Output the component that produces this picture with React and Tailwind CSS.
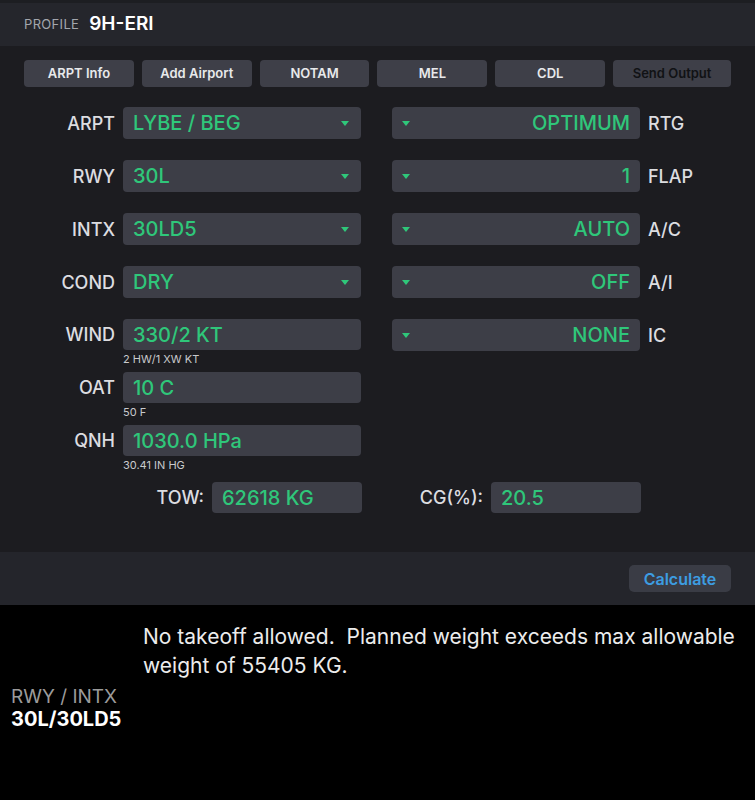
const font = { fontFamily: 'Inter, "Liberation Sans", sans-serif' };

const leftRows = [
  { label: 'ARPT', value: 'LYBE / BEG' },
  { label: 'RWY', value: '30L' },
  { label: 'INTX', value: '30LD5' },
  { label: 'COND', value: 'DRY' },
];

const rightRows = [
  { label: 'RTG', value: 'OPTIMUM' },
  { label: 'FLAP', value: '1' },
  { label: 'A/C', value: 'AUTO' },
  { label: 'A/I', value: 'OFF' },
  { label: 'IC', value: 'NONE' },
];

const inputs = [
  { label: 'WIND', value: '330/2 KT', sub: '2 HW/1 XW KT' },
  { label: 'OAT', value: '10 C', sub: '50 F' },
  { label: 'QNH', value: '1030.0 HPa', sub: '30.41 IN HG' },
];

const buttons = ['ARPT Info', 'Add Airport', 'NOTAM', 'MEL', 'CDL', 'Send Output'];

function Caret() {
  return <span className="w-0 h-0 border-l-[4px] border-r-[4px] border-t-[5px] border-l-transparent border-r-transparent border-t-[#2fc77a]" />;
}

function LeftSelect({ label, value }) {
  return (
    <div className="flex items-center h-[32px] mb-[21px]">
      <div className="w-[115px] text-right text-[18px] font-medium text-[#dcdde0]">{label}</div>
      <div className="ml-[8px] w-[238px] h-full rounded-[4px] bg-[#3d3e47] flex items-center justify-between pl-[10px] pr-[12px]">
        <span className="text-[20px] font-medium text-[#2fc77a]">{value}</span>
        <Caret />
      </div>
    </div>
  );
}

function RightSelect({ label, value }) {
  return (
    <div className="flex items-center h-[32px] mb-[21px]">
      <div className="w-[248px] h-full rounded-[4px] bg-[#3d3e47] flex items-center justify-between pl-[10px] pr-[10px]">
        <Caret />
        <span className="text-[20px] font-medium text-[#2fc77a]">{value}</span>
      </div>
      <div className="ml-[8px] text-[18px] font-medium text-[#dcdde0]">{label}</div>
    </div>
  );
}

function InputRow({ label, value, sub, last }) {
  return (
    <div className={last ? 'mb-[4px]' : ''}>
      <div className="flex items-center h-[31px]">
        <div className="w-[115px] text-right text-[18px] font-medium text-[#dcdde0]">{label}</div>
        <div className="ml-[8px] w-[238px] h-full rounded-[4px] bg-[#3d3e47] flex items-center pl-[10px]">
          <span className="text-[20px] font-medium text-[#2fc77a]">{value}</span>
        </div>
      </div>
      <div className="ml-[123px] h-[22px] pt-[2px] text-[11px] leading-[15px] text-[#c9cacd]">{sub}</div>
    </div>
  );
}

export default function App() {
  return (
    <div className="w-[755px] h-[800px] flex flex-col bg-black" style={font}>
      <div className="h-[46px] bg-[#25262c] border-t-[3px] border-[#1d1e22] flex items-center px-[24px]">
        <span className="text-[13px] text-[#a3a6ad] tracking-wide">PROFILE</span>
        <span className="ml-[10px] text-[19px] font-semibold text-white">9H-ERI</span>
      </div>

      <div className="h-[506px] bg-[#1c1c20]">
        <div className="flex gap-[8px] px-[24px] pt-[14px]">
          {buttons.map(b => (
            <button
              key={b}
              className={`h-[27px] rounded-[4px] bg-[#3e3f48] text-[13px] font-semibold ${b === 'Send Output' ? 'w-[118px] text-[#111215]' : 'w-[110px] text-[#e8e9eb]'}`}
            >
              {b}
            </button>
          ))}
        </div>

        <div className="flex pt-[20px]">
          <div className="w-[361px]">
            {leftRows.map(r => <LeftSelect key={r.label} {...r} />)}
            {inputs.map((r, i) => <InputRow key={r.label} {...r} last={i === inputs.length - 1} />)}
          </div>
          <div className="ml-[31px]">
            {rightRows.map(r => <RightSelect key={r.label} {...r} />)}
          </div>
        </div>

        <div className="flex items-center h-[31px]">
          <div className="w-[204px] text-right text-[18px] font-medium text-[#dcdde0]">TOW:</div>
          <div className="ml-[8px] w-[150px] h-full rounded-[4px] bg-[#3d3e47] flex items-center pl-[10px]">
            <span className="text-[20px] font-medium text-[#2fc77a]">62618 KG</span>
          </div>
          <div className="w-[121px] text-right text-[18px] font-medium text-[#dcdde0]">CG(%):</div>
          <div className="ml-[8px] w-[150px] h-full rounded-[4px] bg-[#3d3e47] flex items-center pl-[10px]">
            <span className="text-[20px] font-medium text-[#2fc77a]">20.5</span>
          </div>
        </div>
      </div>

      <div className="h-[53px] bg-[#24252b] flex items-center justify-end pr-[24px]">
        <button className="w-[102px] h-[27px] rounded-[5px] bg-[#3a3c45] text-[16px] font-semibold text-[#3d9de2]">
          Calculate
        </button>
      </div>

      <div className="flex-1 bg-black">
        <div className="ml-[143px] mt-[17px] w-[610px] text-[21px] leading-[29px] text-[#ececec] whitespace-pre-wrap">
          {'No takeoff allowed.  Planned weight exceeds max allowable weight of 55405 KG.'}
        </div>
        <div className="ml-[11px] mt-[6px]">
          <div className="text-[19px] leading-[22px] text-[#9b9b9b]">RWY / INTX</div>
          <div className="text-[20px] leading-[23px] font-bold text-white">30L/30LD5</div>
        </div>
      </div>
    </div>
  );
}
